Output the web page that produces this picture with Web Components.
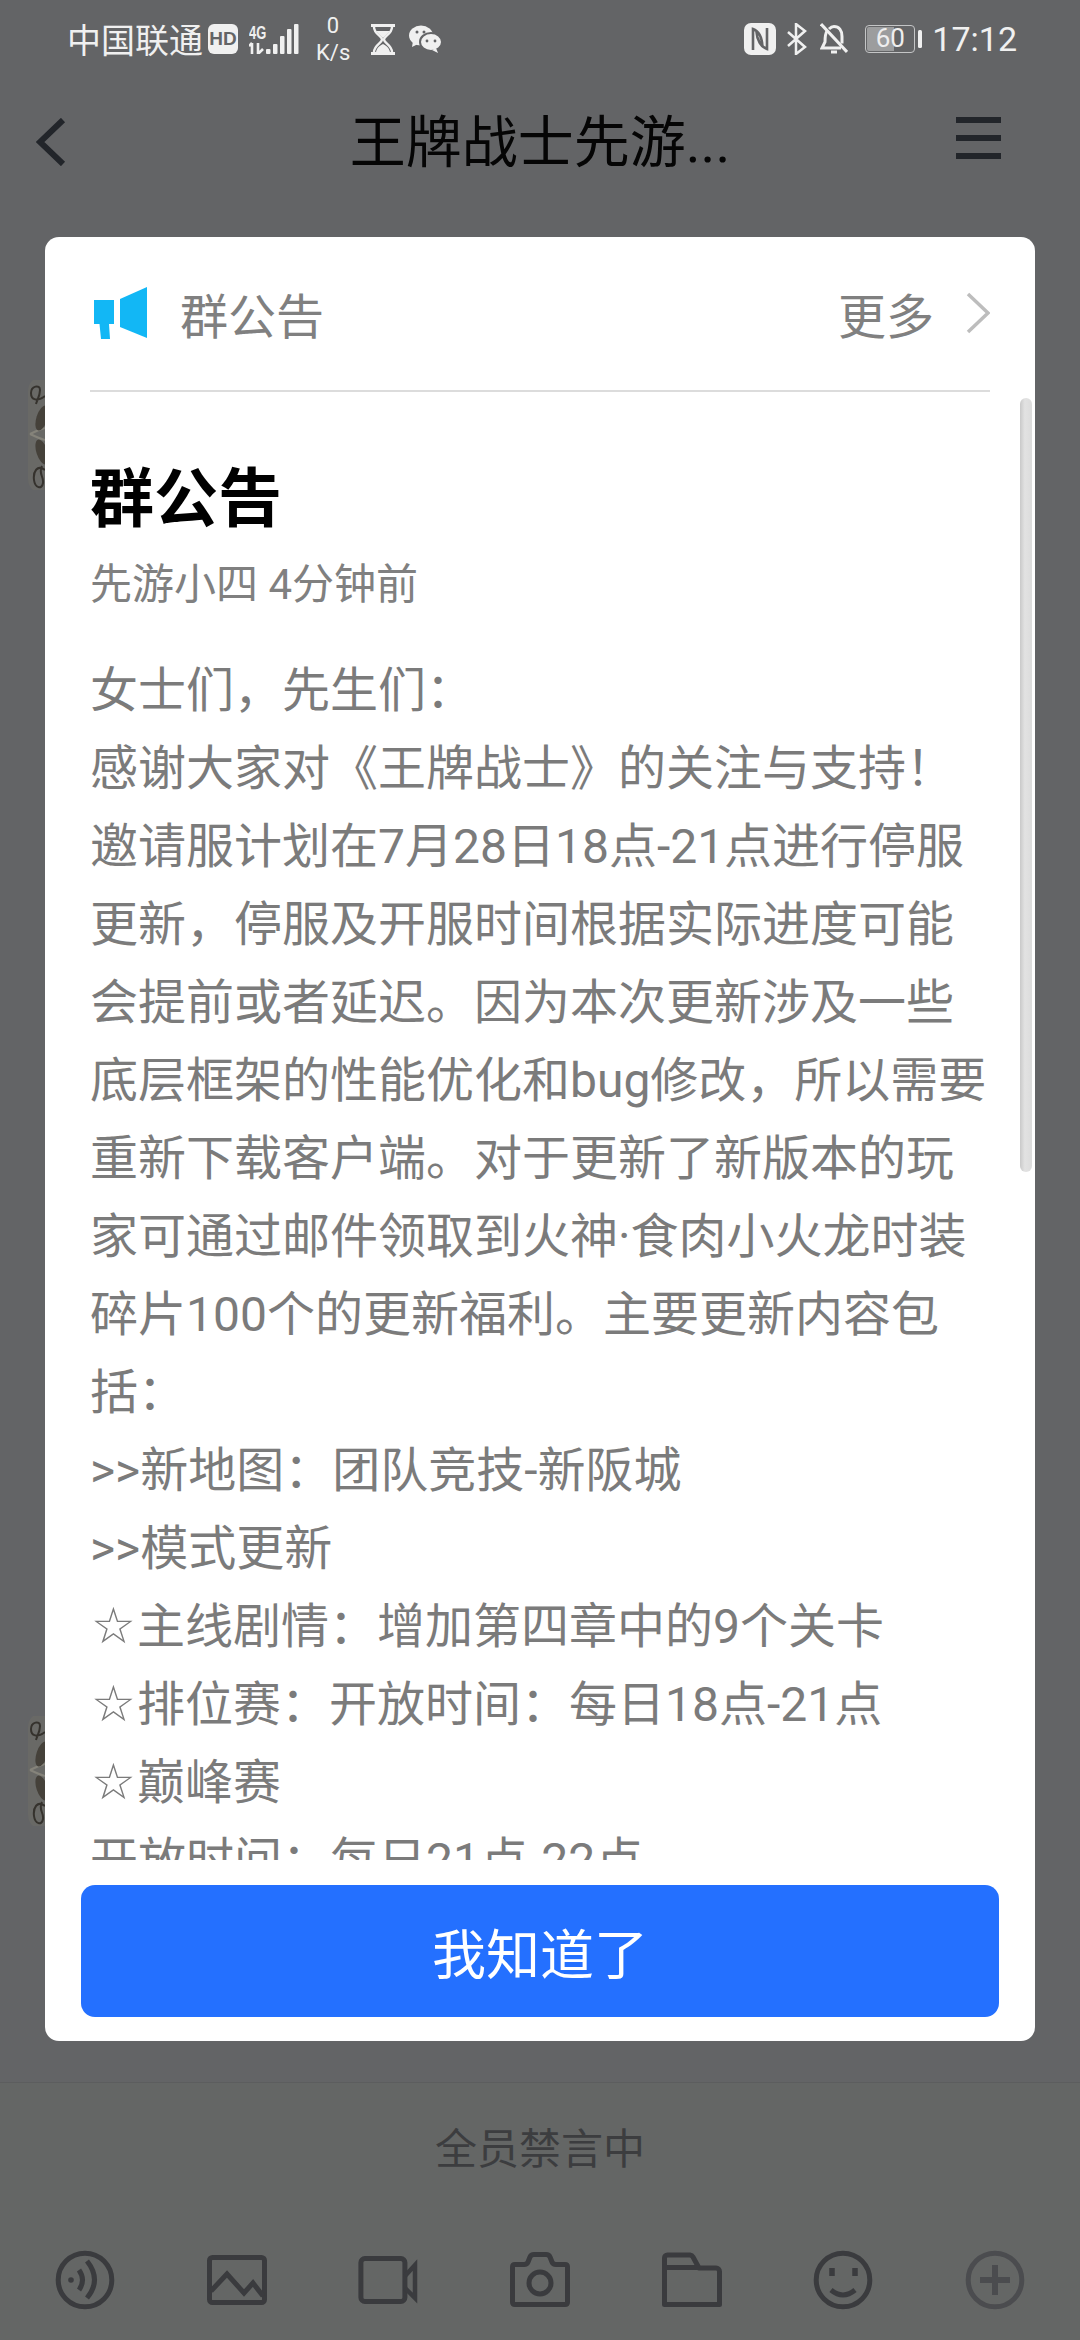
<!DOCTYPE html>
<html lang="zh">
<head>
<meta charset="utf-8">
<title>群公告</title>
<style>
  html, body { margin: 0; padding: 0; background: #636466; }
  body { font-family: Roboto, "Noto Sans CJK SC", sans-serif; }
</style>
</head>
<body>
<chat-screen>
  <status-bar></status-bar>
  <nav-bar>王牌战士先游...</nav-bar>
  <chat-area></chat-area>
  <composer-bar>全员禁言中</composer-bar>
  <notice-dialog slot="overlay">
    <notice-head slot="head"></notice-head>
    <h-title slot="title">群公告</h-title>
    <span slot="meta">先游小四 4分钟前</span>
    女士们，先生们：<br>
    感谢大家对《王牌战士》的关注与支持！<br>
    邀请服计划在7月28日18点-21点进行停服更新，停服及开服时间根据实际进度可能会提前或者延迟。因为本次更新涉及一些底层框架的性能优化和bug修改，所以需要重新下载客户端。对于更新了新版本的玩家可通过邮件领取到火神·食肉小火龙时装碎片100个的更新福利。主要更新内容包括：<br>
    &gt;&gt;新地图：团队竞技-新阪城<br>
    &gt;&gt;模式更新<br>
    <star-mark></star-mark>主线剧情：增加第四章中的9个关卡<br>
    <star-mark></star-mark>排位赛：开放时间：每日18点-21点<br>
    <star-mark></star-mark>巅峰赛<br>
    开放时间：每日21点-22点<br>
    <notice-button slot="action">我知道了</notice-button>
  </notice-dialog>
</chat-screen>

<script>
// root of the page, the dialog sits over the chat
class ChatScreen extends HTMLElement {
  constructor() {
    super();
    this.attachShadow({ mode: 'open' });
    this.shadowRoot.innerHTML = `
      <style>
        :host {
          display: flex;
          flex-direction: column;
          position: relative;
          width: 1080px;
          height: 2340px;
          overflow: hidden;
          background: #636466;
        }
        .overlay { position: absolute; inset: 0; }
      </style>
      <slot></slot>
      <div class="overlay"><slot name="overlay"></slot></div>
    `;
  }
}

class StatusBar extends HTMLElement {
  constructor() {
    super();
    this.attachShadow({ mode: 'open' });
    this.shadowRoot.innerHTML = `
      <style>
        :host {
          display: flex;
          align-items: center;
          height: 78px;
          padding: 0 63px 0 67px;
          color: #f0f0f0;
          font-size: 34px;
          flex: none;
        }
        svg { display: block; flex: none; }
        .carrier { font-family: "Noto Sans CJK SC", sans-serif; line-height: 78px; }
        .hd {
          width: 30px; height: 30px; margin-left: 5px;
          background: #f0f0f0; border-radius: 6px;
          color: #636466; font: bold 19px/30px "Liberation Sans", sans-serif; text-align: center;
        }
        .net { display: flex; align-items: flex-end; margin-left: 11px; }
        .net-type { width: 17px; display: flex; flex-direction: column; }
        .net-type span {
          display: block; width: 25px; height: 18px;
          font: bold 19px/18px "Liberation Sans", sans-serif;
          transform: scaleX(.68); transform-origin: 0 0;
        }
        .speed {
          width: 34px; margin-left: 17px;
          font-size: 22px; line-height: 27px; text-align: center;
        }
        .right { margin-left: auto; display: flex; align-items: center; }
        .battery {
          width: 50px; height: 28px; box-sizing: border-box;
          border: 1.5px solid #c4c5c6; border-radius: 4px;
          background: linear-gradient(90deg, #9c9d9e 58%, transparent 58%);
          background-clip: content-box; padding: 1px;
          margin-left: 17px;
          font-size: 26px; line-height: 23px; text-align: center; color: #eee;
        }
        .time { margin-left: 9px; font-size: 34px; }
      </style>
      <span class="carrier">中国联通</span>
      <span class="hd">HD</span>
      <div class="net">
        <div class="net-type">
          <span>4G</span>
          <svg width="15" height="12" viewBox="0 0 15 12"><path d="M3 1v11M0 4l3-3M9 1v11l5-5" stroke="#f0f0f0" stroke-width="2.6" fill="none"/></svg>
        </div>
        <svg width="33" height="30" viewBox="17 0 33 30" fill="#f0f0f0">
          <rect x="17" y="25" width="4.500" height="5" rx="1"/><rect x="24" y="20" width="4.500" height="10" rx="1"/>
          <rect x="31" y="12" width="4.500" height="18" rx="1"/><rect x="38" y="5" width="4.500" height="25" rx="1"/>
          <rect x="45" y="0" width="4.500" height="30" rx="1"/>
        </svg>
      </div>
      <div class="speed">0<br>K/s</div>
      <svg width="24" height="31" viewBox="0 0 24 31" style="margin-left:21px" fill="none" stroke="#f0f0f0">
        <path d="M0 1.5h24M0 29.5h24" stroke-width="3"/>
        <path d="M3 3 C3 10 11 12 11 15.5 C11 19 3 21 3 28 M21 3 C21 10 13 12 13 15.5 C13 19 21 21 21 28" stroke-width="2.4"/>
        <path d="M5 7h14l-7 7zM5 28c1-5 5-7 7-8 2 1 6 3 7 8z" fill="#f0f0f0" stroke="none"/>
      </svg>
      <svg width="33" height="28" viewBox="0 0 33 28" style="margin-left:14px">
        <ellipse cx="12" cy="10.5" rx="12" ry="10" fill="#f0f0f0"/>
        <path d="M4 16l-1 6 6-3z" fill="#f0f0f0"/>
        <ellipse cx="22" cy="17" rx="11" ry="9" fill="#f0f0f0" stroke="#636466" stroke-width="2"/>
        <path d="M27 23l2 5-6-3z" fill="#f0f0f0"/>
        <g fill="#636466"><circle cx="8" cy="7" r="1.5"/><circle cx="15" cy="7" r="1.5"/><circle cx="18" cy="16" r="1.4"/><circle cx="26" cy="16" r="1.4"/></g>
      </svg>
      <div class="right">
        <svg width="32" height="32" viewBox="0 0 32 32">
          <rect width="32" height="32" rx="7" fill="#f0f0f0"/>
          <path d="M9 27 V6 C15 8 18 15 18.500 24 M23 5 V26 C17 24 13 17 12.500 9" fill="none" stroke="#636466" stroke-width="2.600"/>
        </svg>
        <svg width="20" height="32" viewBox="0 0 20 32" style="margin-left:11px" fill="none" stroke="#f0f0f0" stroke-width="2.500">
          <path d="M1 9l17 15-9 7V1l9 7L1 23"/>
        </svg>
        <svg width="28" height="32" viewBox="0 0 28 32" style="margin-left:13px" fill="none" stroke="#f0f0f0" stroke-width="3">
          <path d="M1 1l26 28"/>
          <path d="M7 8C5 11 5 14 5 19L2 25h19M9 6c2-2 3-2.500 5-2.500 5 0 8 4 8 10v7"/>
          <path d="M11 29h6" stroke-width="3"/>
        </svg>
        <div class="battery">60</div>
        <svg width="5" height="18" viewBox="0 0 5 18" style="margin-left:3px"><rect width="4" height="18" rx="1.500" fill="#f0f0f0"/></svg>
        <span class="time">17:12</span>
      </div>
    `;
  }
}

class NavBar extends HTMLElement {
  constructor() {
    super();
    this.attachShadow({ mode: 'open' });
    this.shadowRoot.innerHTML = `
      <style>
        :host {
          display: grid;
          grid-template-columns: 1fr auto 1fr;
          align-items: center;
          height: 130px;
          padding: 0 36px;
          flex: none;
          color: #050505;
        }
        svg { display: block; }
        .back { margin-bottom: 3px; }
        .menu { justify-self: end; margin: 0 43px 10px 0; }
        .title { font-size: 56px; line-height: 130px; }
      </style>
      <svg class="back" width="30" height="48" viewBox="0 0 30 48"><path d="M27 2 L4 24 L27 46" fill="none" stroke="#22252a" stroke-width="6"/></svg>
      <div class="title"><slot></slot></div>
      <svg class="menu" width="45" height="42" viewBox="0 0 45 42" fill="#22252a"><rect width="45" height="6"/><rect y="18" width="45" height="6"/><rect y="36" width="45" height="6"/></svg>
    `;
  }
}

// only the left edges of two avatars are visible beside the dialog
class ChatArea extends HTMLElement {
  constructor() {
    super();
    this.attachShadow({ mode: 'open' });
    const peek = `
      <svg width="22" height="110" viewBox="0 0 22 110">
        <path d="M22 0H10Q5 4 5 12V98Q5 106 10 110H22z" fill="#696966"/>
        <path d="M7 54Q15 50 22 48M7 54Q15 58 22 60" fill="none" stroke="#85837a" stroke-width="2"/>
        <g fill="none" stroke="#35322d" stroke-width="2">
          <path d="M22 16C14 22 8 20 8 13S17 4 17 10s-3 10-4 14"/>
          <path d="M22 90C14 84 10 92 11 100s8 10 9 3-5-9-1-17"/>
        </g>
        <ellipse cx="19" cy="38" rx="5.500" ry="13" transform="rotate(18 19 38)" fill="#45413a"/>
        <ellipse cx="19" cy="72" rx="5.500" ry="13" transform="rotate(-18 19 72)" fill="#45413a"/>
      </svg>`;
    this.shadowRoot.innerHTML = `
      <style>
        :host {
          display: flex;
          flex-direction: column;
          gap: 1226px;
          flex: 1;
          padding: 172px 0 0 23px;
          box-sizing: border-box;
          overflow: hidden;
        }
        svg { display: block; }
      </style>
      ${peek}${peek}
    `;
  }
}

const TOOL_ICONS = {
  voice: `<circle cx="30" cy="30" r="26.800"/><circle cx="16" cy="30" r="2.800" fill="#3a3b3e" stroke="none"/>
          <path d="M24 20Q31 30 24 40"/><path d="M32 11Q47 30 32 48"/>`,
  image: `<rect x="2.500" y="7.500" width="55" height="45" rx="3"/><path d="M4 41L20 24 37 43 46 33 56 46"/>`,
  video: `<rect x="2.900" y="8.500" width="44" height="43" rx="4"/><path d="M47 26L57 15V48L47 38" stroke-width="4.500"/>`,
  camera: `<path d="M5 14.500H14Q17 14.500 18 12L20 7Q21 4.500 24 4.500H36Q39 4.500 40 7L42 12Q43 14.500 46 14.500H55Q57.500 14.500 57.500 17V52Q57.500 54.500 55 54.500H5Q2.500 54.500 2.500 52V17Q2.500 14.500 5 14.500z"/><circle cx="30" cy="33" r="11"/>`,
  folder: `<path d="M2.500 54.500V8a3 3 0 013-3H28a4 4 0 013 2L37 18H54a3.500 3.500 0 013.500 3.500v33zM2.500 17.500H37" stroke-linejoin="round"/>`,
  smile: `<circle cx="30" cy="30" r="26.800"/><path d="M19 18v8M42 18v8" stroke-width="5.500"/><path d="M18 40Q30 50 42 40"/>`,
  plus: `<circle cx="30" cy="30" r="26.800" stroke="#4b4c4f"/><path d="M15 30H45M30 15V45" stroke="#4b4c4f" stroke-width="6"/>`
};

class ToolIcon extends HTMLElement {
  constructor() {
    super();
    this.attachShadow({ mode: 'open' });
    this.shadowRoot.innerHTML = `
      <style>
        :host { display: flex; justify-content: center; }
        svg { display: block; }
      </style>
      <svg width="60" height="60" viewBox="0 0 60 60" fill="none" stroke="#3a3b3e" stroke-width="5">${TOOL_ICONS[this.getAttribute('name')] || ''}</svg>
    `;
  }
}

class ComposerBar extends HTMLElement {
  constructor() {
    super();
    this.attachShadow({ mode: 'open' });
    const names = ['voice', 'image', 'video', 'camera', 'folder', 'smile', 'plus'];
    this.shadowRoot.innerHTML = `
      <style>
        :host {
          display: block;
          flex: none;
          height: 258px;
          box-sizing: border-box;
          border-top: 1px solid #5c5d5e;
          background: #646665;
        }
        .muted {
          height: 124px;
          display: flex; align-items: center; justify-content: center;
          font-size: 42px; color: #3c3d3f;
        }
        .tools {
          display: grid;
          grid-template-columns: repeat(7, 1fr);
          padding: 43px 9px 0;
        }
      </style>
      <div class="muted"><slot></slot></div>
      <div class="tools">${names.map(n => `<tool-icon name="${n}"></tool-icon>`).join('')}</div>
    `;
  }
}

class NoticeHead extends HTMLElement {
  constructor() {
    super();
    this.attachShadow({ mode: 'open' });
    this.shadowRoot.innerHTML = `
      <style>
        :host {
          display: flex;
          align-items: center;
          height: 155px;
          margin: 0 45px;
          box-sizing: border-box;
          padding: 0 0 2px 3px;
          border-bottom: 2px solid #dcdcdc;
          color: #808080;
          font-size: 48px;
        }
        svg { display: block; flex: none; }
        .name { margin-left: 33px; }
        .more { margin-left: auto; font-size: 48px; }
      </style>
      <svg width="54" height="54" viewBox="0 0 54 54" fill="#12b7f5">
        <path d="M1 14H21V38H16L17 53H8L6.500 38H1z"/>
        <path d="M27 13L54 1V52L27 41z"/>
      </svg>
      <span class="name">群公告</span>
      <span class="more">更多</span>
      <svg width="24" height="42" viewBox="0 0 24 42" style="margin-left:32px">
        <path d="M2 2L22 21 2 40" fill="none" stroke="#bdbdbd" stroke-width="3.500"/>
      </svg>
    `;
  }
}

class HTitle extends HTMLElement {
  constructor() {
    super();
    this.attachShadow({ mode: 'open' });
    this.shadowRoot.innerHTML = `
      <style>
        :host { display: block; font-size: 64px; font-weight: 700; color: #000; line-height: 80px; }
      </style>
      <slot></slot>
    `;
  }
}

// the ☆ in the notice is a thin, smaller glyph than the CJK font has
class StarMark extends HTMLElement {
  constructor() {
    super();
    this.attachShadow({ mode: 'open' });
    this.shadowRoot.innerHTML = `
      <style>
        :host {
          display: inline-block;
          width: 47px;
          text-align: center;
          font-family: "DejaVu Sans", sans-serif;
          font-size: 50px;
          line-height: 1;
        }
      </style>
      ☆
    `;
  }
}

class NoticeDialog extends HTMLElement {
  constructor() {
    super();
    this.attachShadow({ mode: 'open' });
    this.shadowRoot.innerHTML = `
      <style>
        :host {
          display: flex;
          flex-direction: column;
          box-sizing: border-box;
          position: relative;
          width: 990px;
          height: 1804px;
          margin: 237px 0 0 45px;
          background: #fff;
          border-radius: 14px;
          overflow: hidden;
        }
        .scroll {
          flex: none;
          height: 1468px;
          box-sizing: border-box;
          margin: 0 44px 0 45px;
          padding-top: 68px;
          overflow: hidden;
          color: #7b7b7b;
          font-size: 48px;
          line-height: 78px;
        }
        .meta { display: block; margin-top: 15px; margin-bottom: 37px; font-size: 42px; line-height: 60px; color: #808080; }
        .thumb {
          position: absolute;
          right: 3px;
          top: 161px;
          width: 12px;
          height: 774px;
          border-radius: 6px;
          background: linear-gradient(90deg, #c9c9c9, #e2e2e2 40%, #dcdcdc);
        }
        .foot { flex: none; padding: 25px 36px 0; }
      </style>
      <slot name="head"></slot>
      <div class="scroll">
        <slot name="title"></slot>
        <span class="meta"><slot name="meta"></slot></span>
        <slot></slot>
      </div>
      <div class="thumb"></div>
      <div class="foot"><slot name="action"></slot></div>
    `;
  }
}

class NoticeButton extends HTMLElement {
  constructor() {
    super();
    this.attachShadow({ mode: 'open' });
    this.shadowRoot.innerHTML = `
      <style>
        :host {
          display: flex;
          align-items: center;
          justify-content: center;
          height: 132px;
          border-radius: 14px;
          background: #2470ff;
          color: #fff;
          font-size: 54px;
        }
      </style>
      <slot></slot>
    `;
  }
}

customElements.define('chat-screen', ChatScreen);
customElements.define('status-bar', StatusBar);
customElements.define('nav-bar', NavBar);
customElements.define('chat-area', ChatArea);
customElements.define('tool-icon', ToolIcon);
customElements.define('composer-bar', ComposerBar);
customElements.define('notice-head', NoticeHead);
customElements.define('h-title', HTitle);
customElements.define('star-mark', StarMark);
customElements.define('notice-dialog', NoticeDialog);
customElements.define('notice-button', NoticeButton);
</script>
</body>
</html>
